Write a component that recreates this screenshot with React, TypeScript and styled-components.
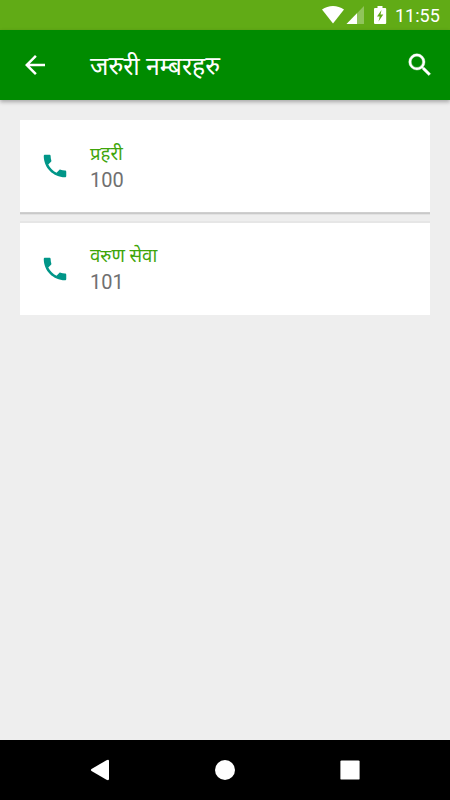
import React from "react";
import styled, { createGlobalStyle } from "styled-components";

const Global = createGlobalStyle`
  * { box-sizing: border-box; }
  body { margin: 0; font-family: Roboto, "Noto Sans", "Noto Sans Devanagari", sans-serif; }
`;

const Screen = styled.div`
  display: flex;
  flex-direction: column;
  width: 450px;
  height: 800px;
  background: #eeeeee;
`;

const StatusBar = styled.div`
  display: flex;
  align-items: center;
  justify-content: flex-end;
  height: 30px;
  flex: none;
  padding-right: 10px;
  background: #61ab16;
  color: #fff;
`;

const StatusIcons = styled.svg`
  display: block;
  flex: none;
  width: 66px;
  height: 30px;
  fill: currentColor;
`;

const Clock = styled.span`
  width: 45px;
  margin-left: 7px;
  font-size: 18px;
  line-height: 30px;
  padding-top: 2px;
  white-space: nowrap;
`;

const AppBar = styled.header`
  display: flex;
  align-items: center;
  flex: none;
  height: 70px;
  padding: 0 15px 0 20px;
  background: #008b00;
  color: #fff;
  box-shadow: 0 2px 4px rgba(0, 0, 0, 0.3);
`;

const Title = styled.h1`
  flex: 1;
  margin: 0 0 0 40px;
  padding-top: 4px;
  font-size: 24.8px;
  font-weight: 400;
  line-height: 40px;
`;

const Icon = styled.svg<{ $size: number }>`
  display: block;
  flex: none;
  width: ${(p) => p.$size}px;
  height: ${(p) => p.$size}px;
  fill: currentColor;
`;

const List = styled.main`
  display: flex;
  flex-direction: column;
  flex: 1;
  gap: 10px;
  padding: 20px;
`;

const Card = styled.article<{ $raised: boolean }>`
  display: flex;
  align-items: center;
  height: ${(p) => (p.$raised ? "93px" : "92px")};
  padding-left: 20px;
  background: #fff;
  color: #009688;
  border-bottom: ${(p) => (p.$raised ? "1px solid #cfcfcf" : "none")};
  box-shadow: ${(p) =>
    p.$raised
      ? "0 1px 0 #c9c9c9, 0 2px 0 #e2e2e2"
      : "0 -1px 0 #e6e6e6, 0 -2px 0 #e6e6e6"};
`;

const Details = styled.div<{ $raised: boolean }>`
  margin-left: 20px;
  padding-top: ${(p) => (p.$raised ? "1px" : "0")};
  padding-bottom: ${(p) => (p.$raised ? "0" : "1px")};
`;

const Name = styled.div`
  font-size: 18.6px;
  line-height: 26px;
  color: #3fa50b;
`;

const PhoneNumber = styled.div`
  font-size: 20px;
  line-height: 26px;
  color: #707070;
`;

const NavBar = styled.nav`
  display: flex;
  align-items: center;
  justify-content: center;
  gap: 95px;
  flex: none;
  height: 60px;
  background: #000;
  color: #fff;
`;

const contacts = [
  { name: "प्रहरी", number: "100" },
  { name: "वरुण सेवा", number: "101" },
];

export default function App() {
  return (
    <Screen>
      <Global />
      <StatusBar>
        <StatusIcons viewBox="0 0 66 30">
          <path d="M11 23.500 0 9.500Q5 6 11 6T22 9.500z" />
          <path fillOpacity=".3" d="M24.500 24H42V6z" />
          <path d="M24.500 24H35V13.200z" />
          <path fillRule="evenodd" d="M55.500 6h5v2h2.700q1 0 1 1v14q0 1-1 1h-10.200q-1 0-1-1V9q0-1 1-1h2.500zM59.500 10 55 16.500h2.700l-1.200 5 4.800-7h-2.800z" />
        </StatusIcons>
        <Clock>11:55</Clock>
      </StatusBar>
      <AppBar>
        <Icon $size={30} viewBox="0 0 24 24"><path d="M20 11H7.830l5.590-5.590L12 4l-8 8 8 8 1.410-1.410L7.830 13H20v-2z" /></Icon>
        <Title>जरुरी नम्बरहरु</Title>
        <Icon $size={30} viewBox="0 0 24 24"><path d="M15.500 14h-.79l-.28-.27A6.471 6.471 0 0 0 16 9.500 6.500 6.500 0 1 0 9.500 16c1.610 0 3.090-.59 4.230-1.570l.27.28v.79l5 4.990L20.490 19l-4.990-5zm-6 0C7.010 14 5 11.990 5 9.500S7.010 5 9.500 5 14 7.010 14 9.500 11.990 14 9.500 14z" stroke="currentColor" strokeWidth=".3" /></Icon>
      </AppBar>
      <List>
        {contacts.map((c, i) => (
          <Card key={c.number} $raised={i === 0}>
            <Icon $size={30} viewBox="0 0 24 24"><path d="M6.620 10.790c1.440 2.830 3.760 5.140 6.590 6.590l2.200-2.200c.27-.27.67-.36 1.020-.24 1.120.37 2.330.57 3.570.57.55 0 1 .45 1 1V20c0 .55-.45 1-1 1-9.390 0-17-7.610-17-17 0-.55.45-1 1-1h3.500c.55 0 1 .45 1 1 0 1.250.2 2.450.57 3.570.11.35.03.74-.25 1.020l-2.200 2.200z" /></Icon>
            <Details $raised={i === 0}>
              <Name>{c.name}</Name>
              <PhoneNumber>{c.number}</PhoneNumber>
            </Details>
          </Card>
        ))}
      </List>
      <NavBar>
        <Icon $size={30} viewBox="0 0 30 30"><path d="M6.500 14Q5.300 15 6.500 16L21.500 24.800Q24 25.800 24 24V6Q24 4.200 21.500 5.200z" /></Icon>
        <Icon $size={30} viewBox="0 0 30 30"><circle cx="15" cy="15" r="10" /></Icon>
        <Icon $size={30} viewBox="0 0 30 30"><rect x="5.400" y="5.400" width="19.200" height="19.200" rx="1.200" /></Icon>
      </NavBar>
    </Screen>
  );
}
